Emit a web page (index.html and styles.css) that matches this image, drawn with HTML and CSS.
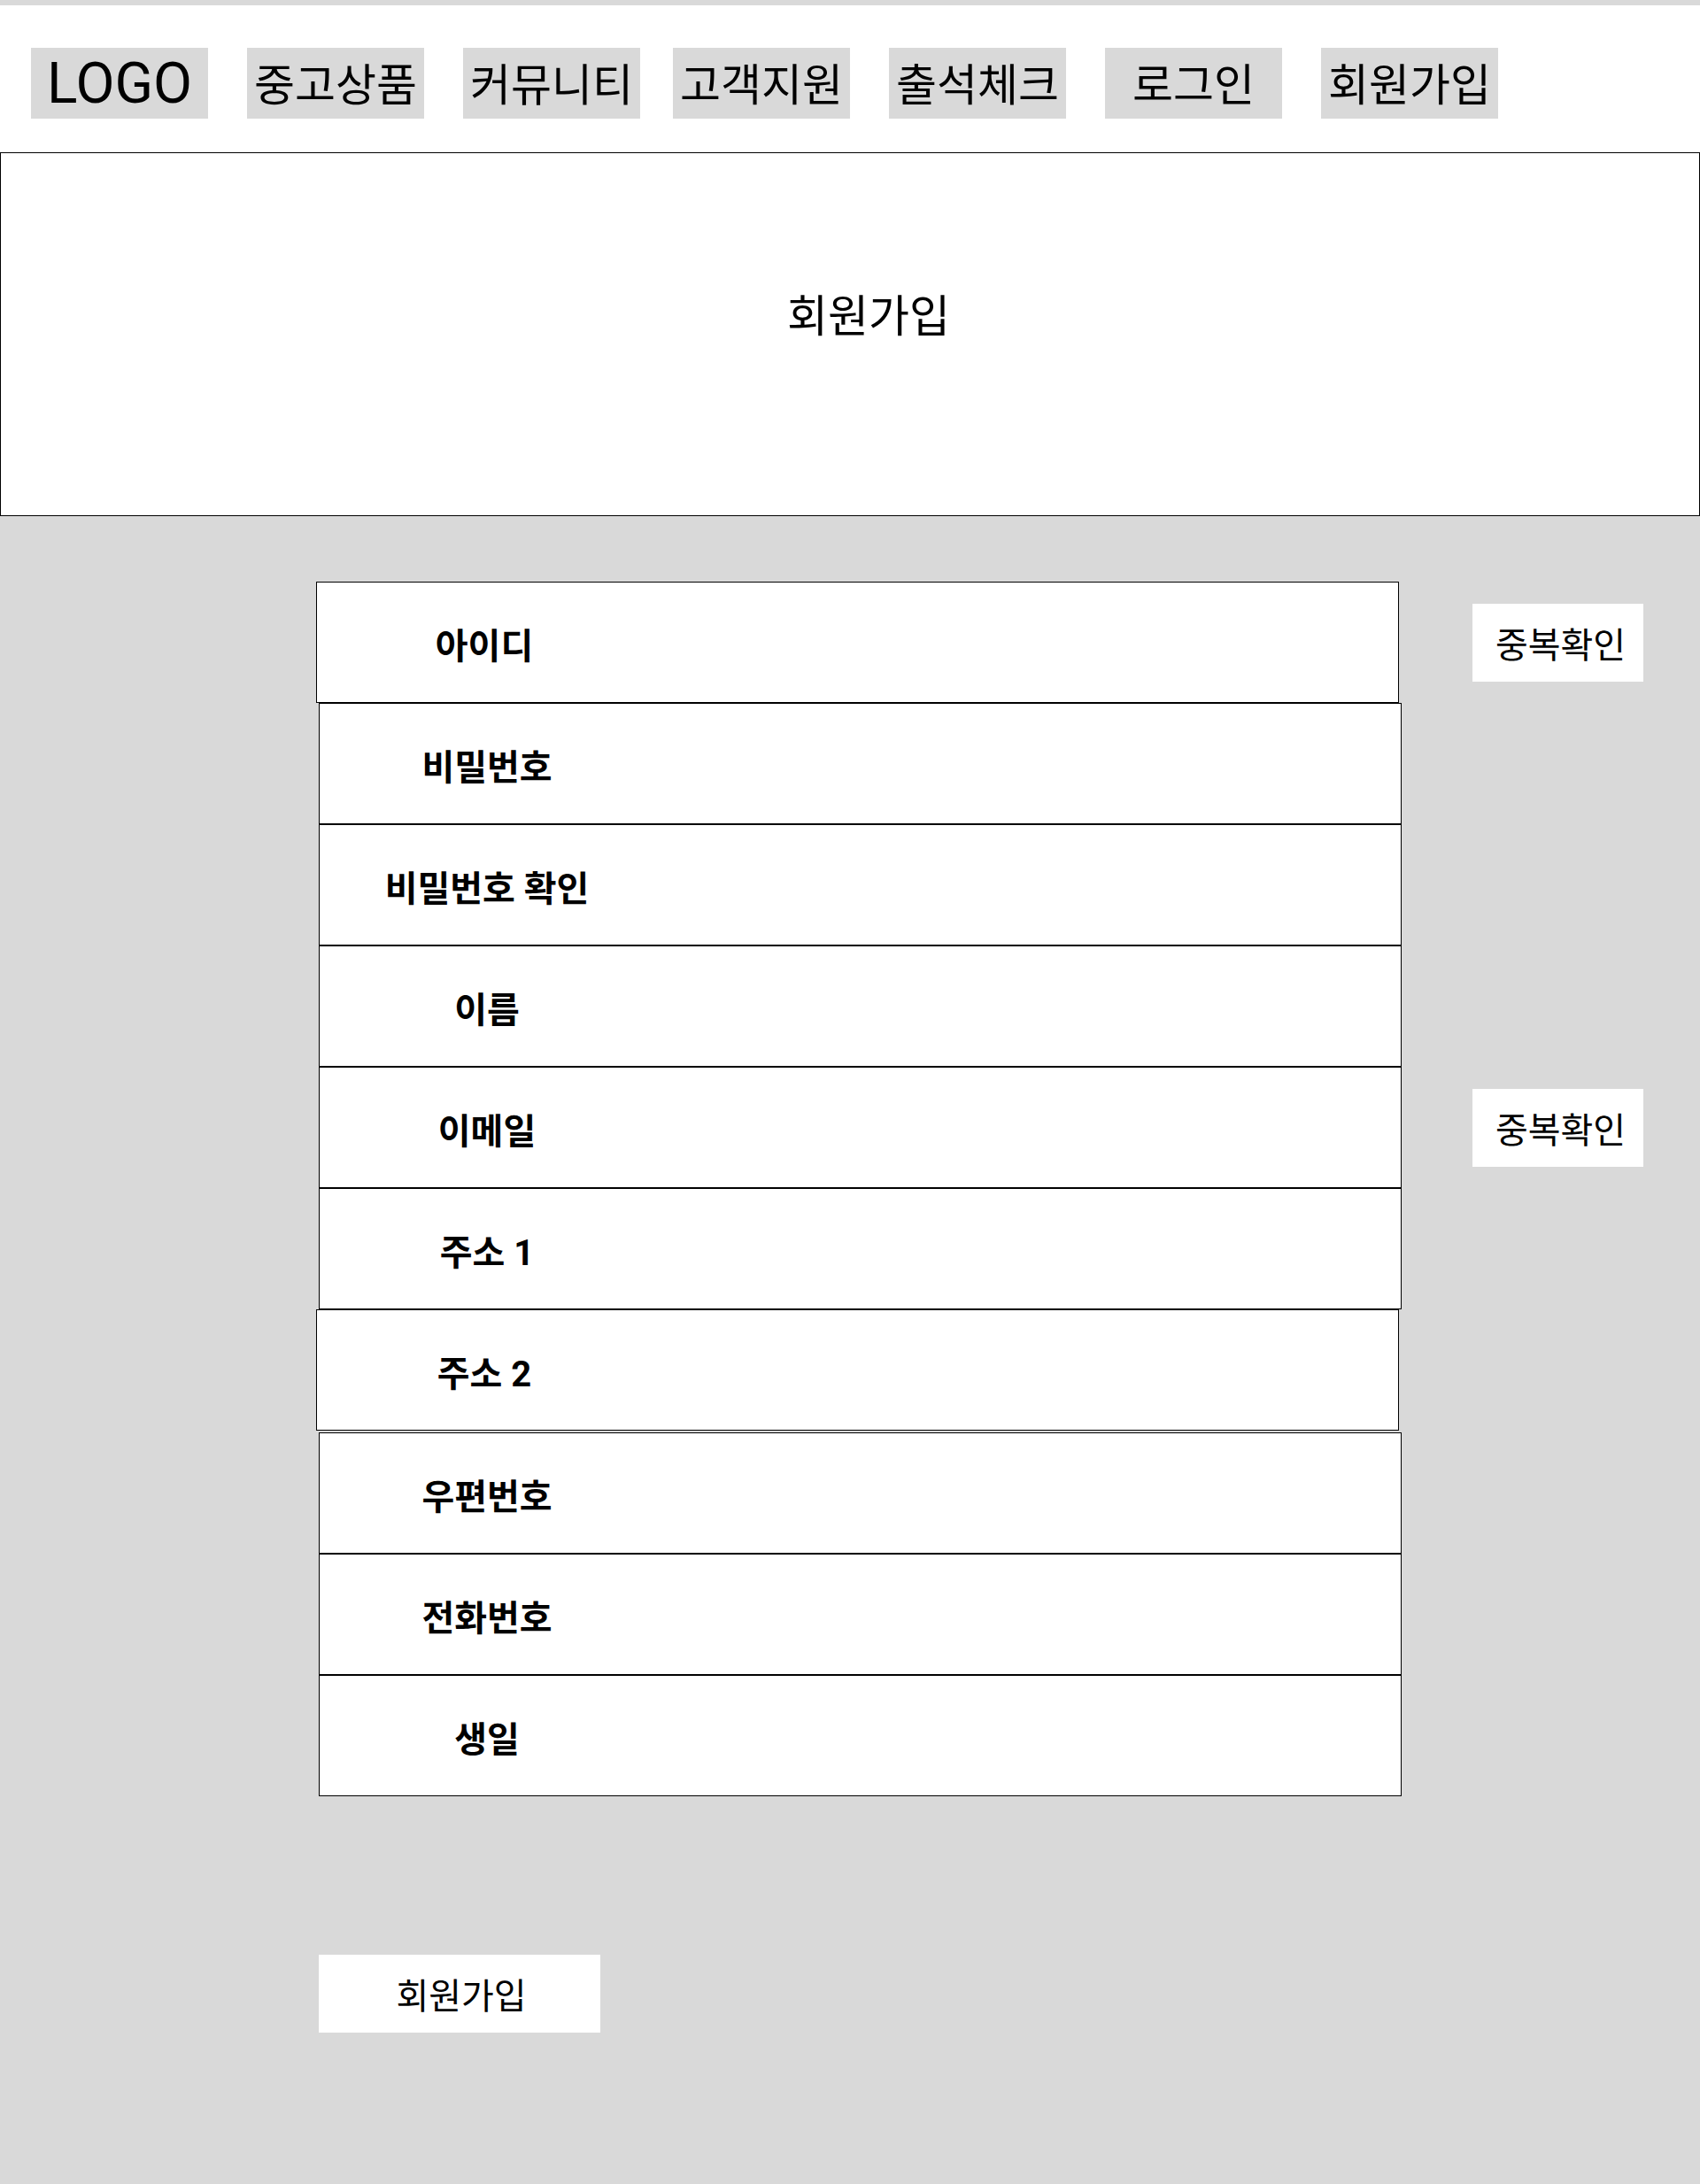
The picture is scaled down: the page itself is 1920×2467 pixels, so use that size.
FILE: index.html
```html
<!DOCTYPE html>
<html lang="ko">
<head>
  <meta charset="UTF-8">
  <meta name="viewport" content="width=device-width, initial-scale=1.0">
  <title>회원가입</title>
  <link rel="stylesheet" href="styles.css">
</head>
<body>
  <header class="header">
    <nav class="nav">
      <a class="nav-item nav-logo" href="#">LOGO</a>
      <a class="nav-item" href="#">중고상품</a>
      <a class="nav-item" href="#">커뮤니티</a>
      <a class="nav-item nav-tight" href="#">고객지원</a>
      <a class="nav-item" href="#">출석체크</a>
      <a class="nav-item" href="#">로그인</a>
      <a class="nav-item" href="#">회원가입</a>
    </nav>
  </header>

  <section class="hero">
    <h1 class="hero-title">회원가입</h1>
  </section>

  <main class="join">
    <form class="join-form">
      <div class="form-row">
        <div class="field field-shift"><label class="field-label">아이디</label></div>
        <button type="button" class="side-btn">중복확인</button>
      </div>
      <div class="form-row">
        <div class="field"><label class="field-label">비밀번호</label></div>
      </div>
      <div class="form-row">
        <div class="field"><label class="field-label">비밀번호 확인</label></div>
      </div>
      <div class="form-row">
        <div class="field"><label class="field-label">이름</label></div>
      </div>
      <div class="form-row">
        <div class="field"><label class="field-label">이메일</label></div>
        <button type="button" class="side-btn">중복확인</button>
      </div>
      <div class="form-row">
        <div class="field"><label class="field-label">주소 1</label></div>
      </div>
      <div class="form-row row-gap">
        <div class="field field-shift"><label class="field-label">주소 2</label></div>
      </div>
      <div class="form-row">
        <div class="field"><label class="field-label">우편번호</label></div>
      </div>
      <div class="form-row">
        <div class="field"><label class="field-label">전화번호</label></div>
      </div>
      <div class="form-row">
        <div class="field"><label class="field-label">생일</label></div>
      </div>

      <button type="submit" class="submit-btn">회원가입</button>
    </form>
  </main>
</body>
</html>
```

FILE: styles.css
```css
body {
  margin: 0;
  min-height: 2467px;
  background-color: #d9d9d9;
  font-family: Roboto, "Noto Sans CJK KR", sans-serif;
  color: #000;
}

/* 상단 메뉴 */
.header {
  border-top: 6px solid #d9d9d9;
  height: 172px;
  background-color: #fff;
  box-sizing: border-box;
  padding: 48px 0 0 35px;
}
.nav {
  display: flex;
  gap: 44px;
}
.nav-item {
  width: 200px;
  height: 80px;
  box-sizing: border-box;
  padding-bottom: 4px;
  display: flex;
  justify-content: center;
  align-items: center;
  background-color: #d9d9d9;
  color: #000;
  text-decoration: none;
  font-size: 50px;
}
.nav-logo {
  font-size: 64px;
  padding-bottom: 0;
}
.nav-tight {
  margin-left: -7px;
}

/* 타이틀 영역 */
.hero {
  height: 411px;
  box-sizing: border-box;
  border: 1px solid #000;
  background-color: #fff;
  padding: 160px 0 0 42px;
}
.hero-title {
  margin: 0;
  text-align: center;
  font-size: 50px;
  font-weight: normal;
  line-height: 50px;
}

/* 입력 폼 */
.join {
  padding: 74px 0 0 360px;
}
.form-row {
  display: grid;
  grid-template-columns: 1223px 193px;
  column-gap: 80px;
  align-items: center;
}
.row-gap {
  margin-bottom: 2px;
}
.field {
  width: 1223px;
  height: 137px;
  box-sizing: border-box;
  border: 1px solid #000;
  background-color: #fff;
  display: flex;
  align-items: center;
}
.field-shift {
  margin-left: -3px;
}
.field-label {
  width: 378px;
  text-align: center;
  font-size: 40px;
  font-weight: bold;
  padding-top: 3px;
}
.side-btn {
  width: 193px;
  height: 88px;
  border: none;
  background-color: #fff;
  font-family: inherit;
  font-size: 40px;
  color: #000;
  padding: 0 0 0 6px;
}
.submit-btn {
  display: block;
  margin-top: 179px;
  width: 318px;
  height: 88px;
  border: none;
  background-color: #fff;
  font-family: inherit;
  font-size: 40px;
  color: #000;
  padding: 0 0 0 4px;
}
```
